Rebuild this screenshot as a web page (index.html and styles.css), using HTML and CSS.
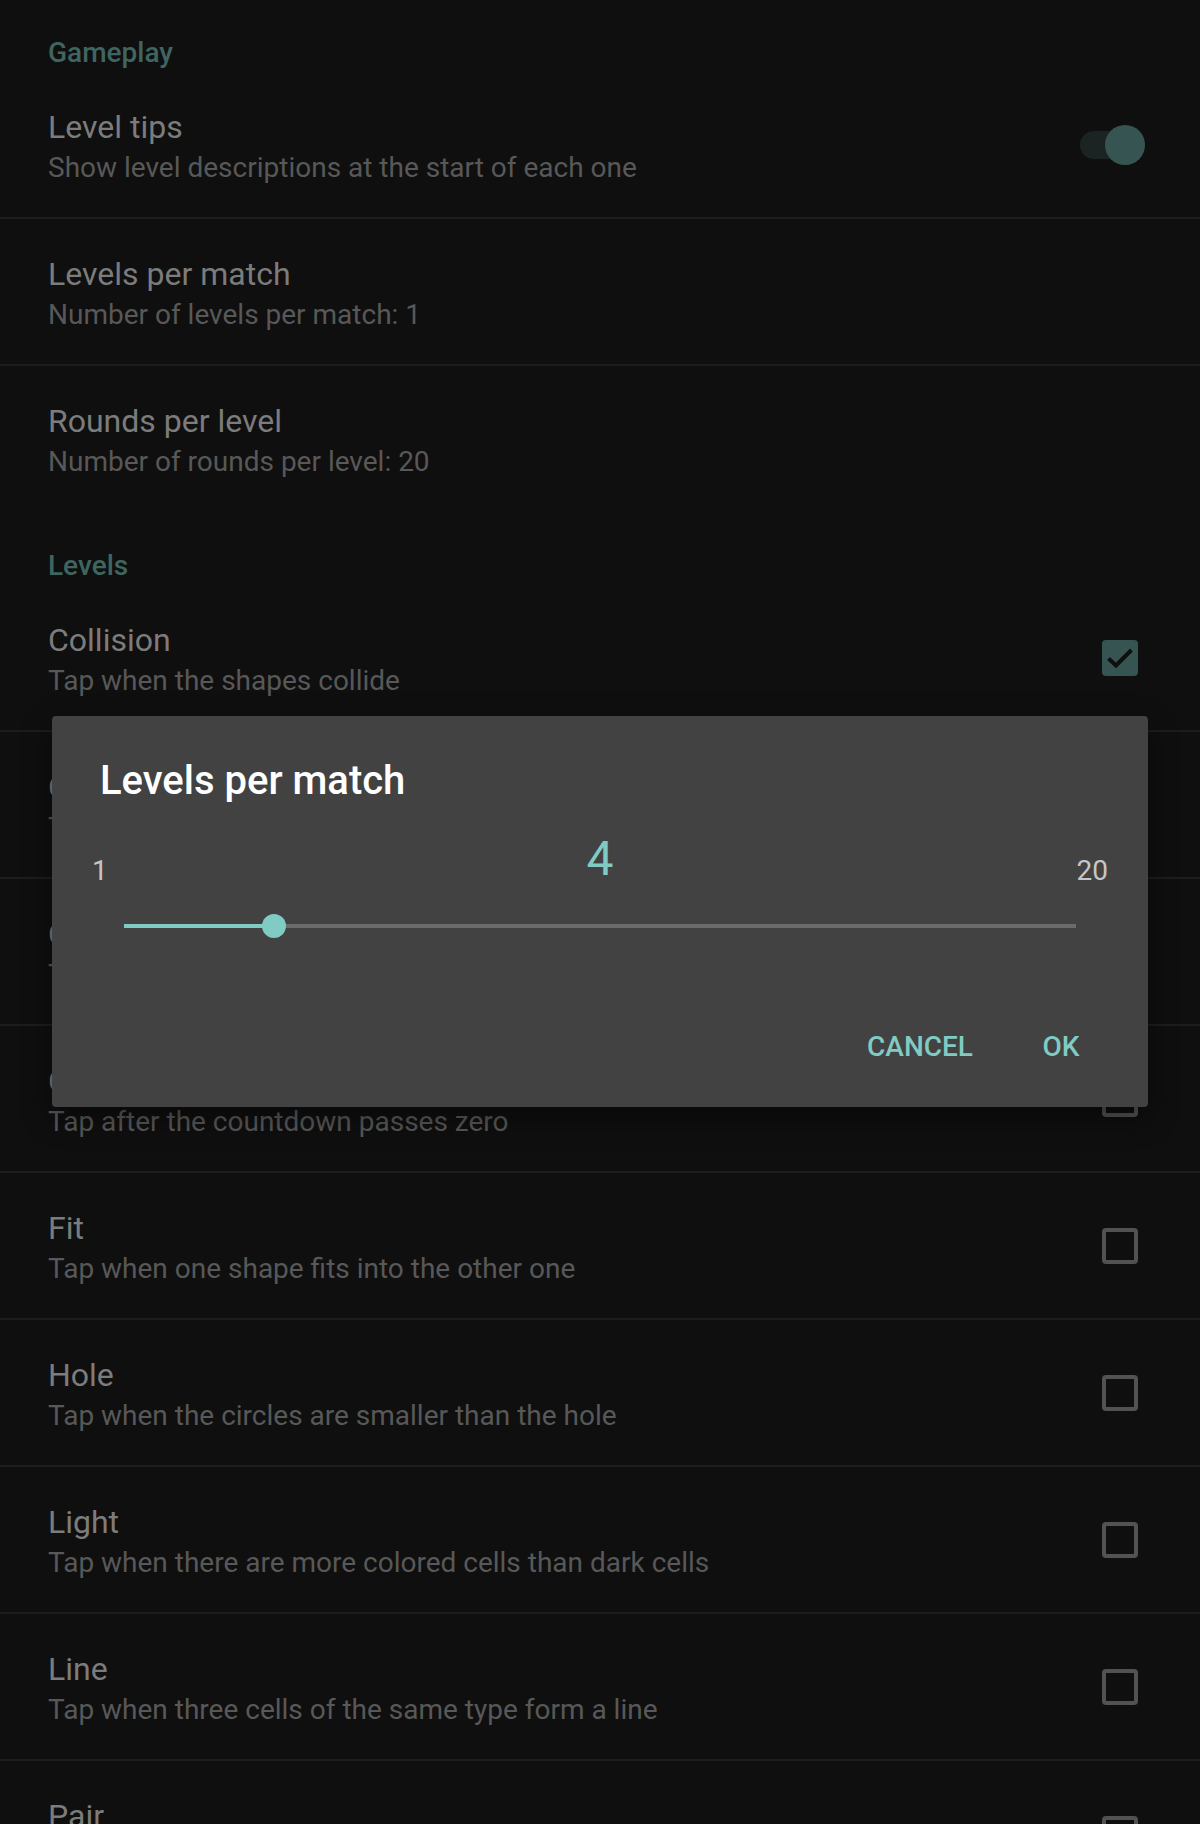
FILE: index.html
```html
<!DOCTYPE html>
<html lang="en">
<head>
<meta charset="utf-8">
<title>Settings</title>
<link rel="stylesheet" href="styles.css">
</head>
<body>
<div class="screen">
  <div class="category">Gameplay</div>
  <div class="pref">
    <div class="texts">
      <div class="title">Level tips</div>
      <div class="summary">Show level descriptions at the start of each one</div>
    </div>
    <div class="switch"><div class="track"></div><div class="thumb"></div></div>
  </div>
  <div class="pref">
    <div class="texts">
      <div class="title">Levels per match</div>
      <div class="summary">Number of levels per match: 1</div>
    </div>
  </div>
  <div class="pref last">
    <div class="texts">
      <div class="title">Rounds per level</div>
      <div class="summary">Number of rounds per level: 20</div>
    </div>
  </div>

  <div class="category">Levels</div>
  <div class="pref">
    <div class="texts">
      <div class="title">Collision</div>
      <div class="summary">Tap when the shapes collide</div>
    </div>
    <div class="checkbox checked">
      <svg viewBox="0 0 28 28" width="28" height="28"><polyline points="2.5,14.5 10,21.5 25.5,6" fill="none" stroke="#0f0f0f" stroke-width="4"/></svg>
    </div>
  </div>
  <div class="pref">
    <div class="texts">
      <div class="title">Color</div>
      <div class="summary">Tap when both shapes have the same color</div>
    </div>
    <div class="checkbox"></div>
  </div>
  <div class="pref">
    <div class="texts">
      <div class="title">Compare</div>
      <div class="summary">Tap when the larger shape is on top</div>
    </div>
    <div class="checkbox"></div>
  </div>
  <div class="pref">
    <div class="texts">
      <div class="title">Countdown</div>
      <div class="summary">Tap after the countdown passes zero</div>
    </div>
    <div class="checkbox"></div>
  </div>
  <div class="pref">
    <div class="texts">
      <div class="title">Fit</div>
      <div class="summary">Tap when one shape fits into the other one</div>
    </div>
    <div class="checkbox"></div>
  </div>
  <div class="pref">
    <div class="texts">
      <div class="title">Hole</div>
      <div class="summary">Tap when the circles are smaller than the hole</div>
    </div>
    <div class="checkbox"></div>
  </div>
  <div class="pref">
    <div class="texts">
      <div class="title">Light</div>
      <div class="summary">Tap when there are more colored cells than dark cells</div>
    </div>
    <div class="checkbox"></div>
  </div>
  <div class="pref">
    <div class="texts">
      <div class="title">Line</div>
      <div class="summary">Tap when three cells of the same type form a line</div>
    </div>
    <div class="checkbox"></div>
  </div>
  <div class="pref">
    <div class="texts">
      <div class="title">Pair</div>
      <div class="summary">Tap when two cells of the same type are next to each other</div>
    </div>
    <div class="checkbox"></div>
  </div>
</div>

<div class="dialog">
  <div class="dialog-title">Levels per match</div>
  <div class="values">
    <span class="min">1</span>
    <span class="current">4</span>
    <span class="max">20</span>
  </div>
  <div class="slider">
    <div class="slider-track">
      <div class="slider-fill" style="width: 15.79%"></div>
      <div class="slider-thumb" style="left: 15.79%"></div>
    </div>
  </div>
  <div class="buttons">
    <div class="btn">CANCEL</div>
    <div class="btn">OK</div>
  </div>
</div>
</body>
</html>
```

FILE: styles.css
```css
html, body {
  margin: 0;
  padding: 0;
  height: 1824px;
  overflow: hidden;
  background: #0f0f0f;
  font-family: "Roboto", "Noto Sans", sans-serif;
}

.screen {
  width: 1200px;
}

.category {
  height: 72px;
  box-sizing: border-box;
  padding: 35px 48px 0;
  font-size: 28px;
  line-height: 36px;
  font-weight: 500;
  color: #3f6561;
}

.pref {
  height: 147px;
  box-sizing: border-box;
  border-bottom: 2px solid #1d1d1d;
  padding: 0 62px 0 48px;
  display: flex;
  align-items: center;
}

.pref.last {
  border-bottom: none;
}

.texts {
  flex: 1;
  align-self: flex-start;
  padding-top: 35px;
  white-space: nowrap;
}

.title {
  font-size: 32px;
  line-height: 40px;
  color: #7c7c7c;
}

.summary {
  margin-top: 1px;
  font-size: 28px;
  line-height: 40px;
  color: #585858;
}

.switch {
  position: relative;
  width: 58px;
  height: 28px;
}

.track {
  width: 58px;
  height: 28px;
  border-radius: 14px;
  background: #1b2422;
}

.thumb {
  position: absolute;
  left: 25px;
  top: -6px;
  width: 40px;
  height: 40px;
  border-radius: 50%;
  background: #365552;
}

.checkbox {
  width: 36px;
  height: 36px;
  box-sizing: border-box;
  border: 4px solid #525252;
  border-radius: 4px;
  display: flex;
  align-items: center;
  justify-content: center;
}

.checkbox.checked {
  background: #365552;
  border-color: #365552;
}

.dialog {
  position: absolute;
  left: 52px;
  top: 716px;
  width: 1096px;
  box-sizing: border-box;
  padding: 41px 0 24px;
  background: #424242;
  border-radius: 4px;
  box-shadow: 0 10px 30px rgba(0, 0, 0, 0.45);
}

.dialog-title {
  padding-left: 48px;
  font-size: 40px;
  line-height: 48px;
  font-weight: 500;
  color: #ffffff;
}

.values {
  margin-top: 26px;
  height: 56px;
  padding: 0 40px;
  display: grid;
  grid-template-columns: 1fr auto 1fr;
  align-items: end;
}

.min, .max {
  font-size: 28px;
  line-height: 33px;
  color: #c6c6c6;
}

.max {
  justify-self: end;
}

.current {
  font-size: 48px;
  line-height: 56px;
  color: #80cbc4;
}

.slider {
  margin-top: 15px;
  height: 48px;
  padding: 0 72px;
  display: flex;
  align-items: center;
}

.slider-track {
  position: relative;
  flex: 1;
  height: 4px;
  background: #6b6b6b;
}

.slider-fill {
  height: 4px;
  background: #80cbc4;
}

.slider-thumb {
  position: absolute;
  top: -10px;
  width: 24px;
  height: 24px;
  margin-left: -12px;
  border-radius: 50%;
  background: #80cbc4;
}

.buttons {
  margin-top: 61px;
  padding-right: 23px;
  display: flex;
  justify-content: flex-end;
  gap: 8px;
}

.btn {
  min-width: 128px;
  height: 72px;
  box-sizing: border-box;
  padding: 0 16px;
  text-align: center;
  font-size: 28px;
  line-height: 72px;
  font-weight: 500;
  color: #80cbc4;
}
```
